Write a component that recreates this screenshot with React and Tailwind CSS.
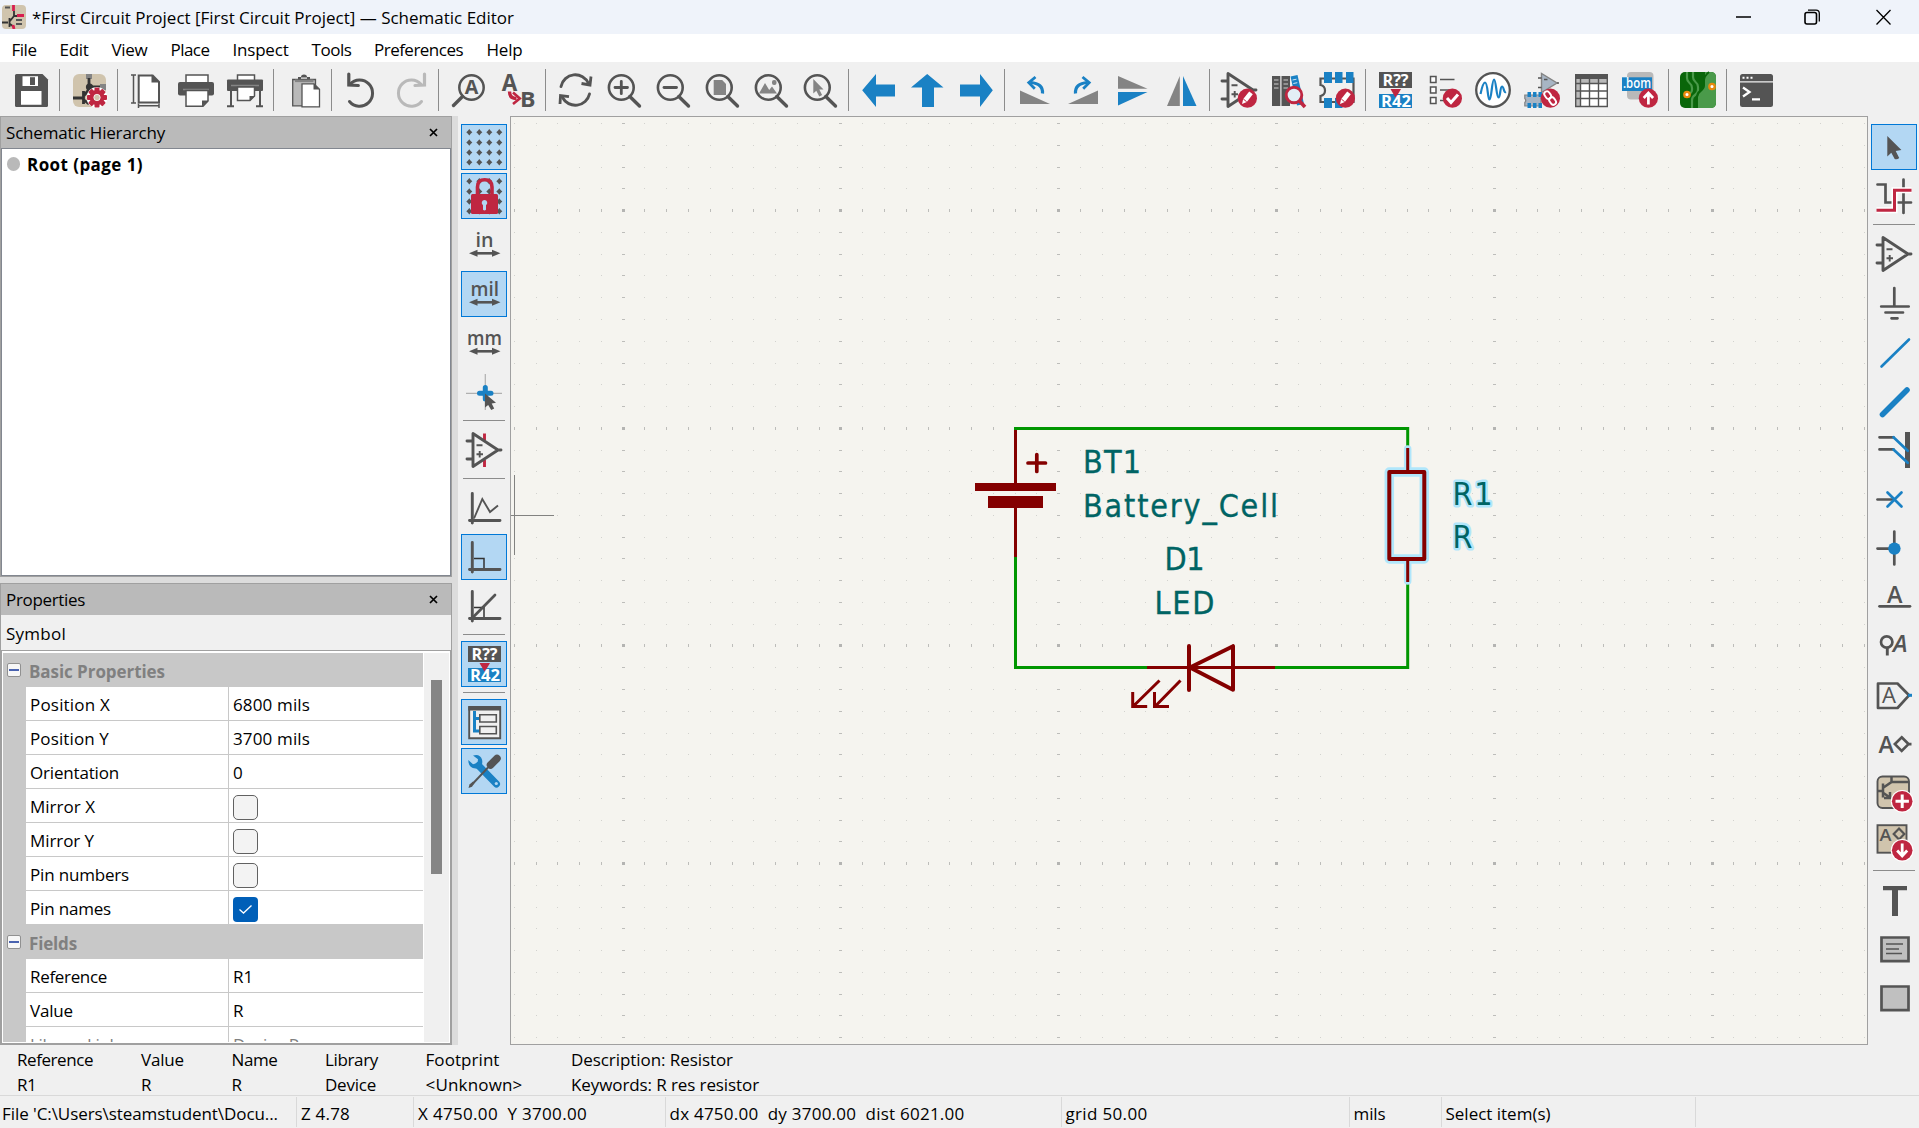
import React, { useLayoutEffect, useRef } from "react";

const D = "#545454";
const B = "#1a81c4";
const R = "#bf2641";
const G = "#848484";
const TAN = "#d0c4ad";

/* A run of text whose tracking is adjusted so it occupies w pixels. */
function Fit({ w, className = "", children }) {
  const ref = useRef(null);
  useLayoutEffect(() => {
    const el = ref.current;
    el.style.letterSpacing = "0px";
    const natural = el.getBoundingClientRect().width;
    el.style.letterSpacing = (w - natural) / children.length + "px";
  }, [w, children]);
  return (
    <span ref={ref} className={"inline-block whitespace-pre " + className}>
      {children}
    </span>
  );
}

const Svg = ({ children }) => (
  <svg width="36" height="36" viewBox="0 0 36 36" fill="none" className="shrink-0 overflow-visible">
    {children}
  </svg>
);
const Txt = ({ x, y, s, w, fill = D, bold, semi, italic, children }) => (
  <text
    x={x}
    y={y}
    fontSize={s}
    textLength={w}
    lengthAdjust="spacingAndGlyphs"
    fill={fill}
    fontWeight={bold ? 700 : semi ? 600 : 400}
    fontStyle={italic ? "italic" : "normal"}
    fontFamily='"Open Sans", sans-serif'
  >
    {children}
  </text>
);
const Badge = ({ children, r = 9.6 }) => (
  <g>
    <circle cx="26.4" cy="26.2" r={r} fill={R} />
    {children}
  </g>
);
const Pencil = () => (
  <Badge>
    <path d="M21 32l1.2-5 6-7.6 3.6 2.9-6 7.6z" fill="#fff" />
    <path d="M22.3 27l3.4 2.8" stroke={R} strokeWidth="1" />
  </Badge>
);
const Lens = ({ children }) => (
  <Svg>
    <ellipse cx="15.3" cy="15.5" rx="12.4" ry="12.2" stroke={D} strokeWidth="2.6" />
    <path d="M23.8 24.5L33.5 34" stroke={D} strokeWidth="3.4" strokeLinecap="round" />
    {children}
  </Svg>
);
const OpAmp = ({ children }) => (
  <>
    <path d="M1 9h6M1 27h6M7 1.5v33L32 18zM32 18h3" stroke={D} strokeWidth="2.9" strokeLinecap="round" strokeLinejoin="round" />
    <path d="M10.500 13.300h6M10.500 22.300h6.500M13.700 19v6.500" stroke={D} strokeWidth="1.900" />
    {children}
  </>
);
const Dots = () => (
  <>
    {[3.3, 13.3, 23.3, 33.3].map((x) =>
      [3.3, 13.5, 23.5, 33.3].map((y) => (
        <path key={x + "-" + y} d={`M${x - 3} ${y}l1.600-1.500 1.400-1.700 1.400 1.700 1.600 1.500-1.600 1.500-1.400 1.700-1.400-1.700z`} fill={D} />
      ))
    )}
  </>
);
const HArrow = () => (
  <>
    <path d="M7 26.300h23" stroke={D} strokeWidth="2.600" />
    <path d="M3 26.300l8.500-3.500v7zM34.500 26.300l-8.500-3.500v7z" fill={D} />
  </>
);
const Axes = ({ children }) => (
  <Svg>
    {children}
    <path d="M6.300 3.500V33M3.500 30.500H34" stroke={D} strokeWidth="2.900" strokeLinecap="round" />
  </Svg>
);
const Annotate = () => (
  <Svg>
    <rect x="2" y="0" width="33" height="16" fill={D} />
    <rect x="2" y="22" width="33" height="14" fill={B} />
    <Txt x="5.5" y="13.5" s="15.5" w="26" fill="#fff" bold>R??</Txt>
    <path d="M13.500 17h10.500l-5.300 9z" fill={R} />
    <Txt x="4" y="34.5" s="15.5" w="30" fill="#fff" bold>R42</Txt>
  </Svg>
);

const icons = {
  save: (
    <Svg>
      <path d="M3.500 2h26l5.500 5.500V33.500q0 1.500-1.500 1.500h-30Q2 35 2 33.500v-30Q2 2 3.500 2z" fill={D} />
      <path d="M9.500 4.200h15.500V14H9.500zM8 19h20.500v13.700H8z" fill="#fff" />
      <path d="M17 5.200h5V13h-5z" fill={D} />
    </Svg>
  ),
  settings: (
    <Svg>
      <rect x="2" y="2" width="33" height="33" rx="6" fill={TAN} />
      <path d="M15 2h6v5h-6zM29 12h6v6h-6z" fill={G} />
      <path d="M18 6v9M2 26h10M12.500 19v13M12.500 24l6-7M13 28l5 4M20 15h9" stroke="#333" strokeWidth="2.800" />
      <circle cx="18.500" cy="15" r="3.600" fill="#333" />
      <g transform="translate(26 25.500)">
        <circle r="10.500" fill="#fff" />
        {[0, 45, 90, 135].map((a) => (
          <rect key={a} x="-2.500" y="-10" width="5" height="20" rx="1" fill={R} transform={`rotate(${a})`} />
        ))}
        <circle r="7.400" fill={R} />
        <circle r="3.200" fill={TAN} stroke="#fff" strokeWidth=".8" />
      </g>
    </Svg>
  ),
  page: (
    <Svg>
      <path d="M9.700 3.500h14l6.300 6.500v20.500H9.700z" fill="#fff" stroke={D} strokeWidth="2" />
      <path d="M22.500 2.500v8h8z" fill={D} />
      <path d="M4.500 3v28M2 3h5M2 31h5M9.500 33.800H30M9.500 31.500v4.500M30 31.500v4.500" stroke={D} strokeWidth="1.500" />
    </Svg>
  ),
  print: (
    <Svg>
      <path d="M8 11V3h22v8" fill="#fff" stroke={D} strokeWidth="1.500" />
      <path d="M2 10h32q2 0 2 2v9.500q0 2-2 2H2q-2 0-2-2V12q0-2 2-2z" fill={D} />
      <path d="M5 17.500h26" stroke={G} strokeWidth="1.500" />
      <path d="M8 18.500h22V29l-5 5.300H8z" fill="#fff" stroke={D} strokeWidth="1.500" />
      <path d="M24 34.500v-6h6.500z" fill={D} />
    </Svg>
  ),
  plot: (
    <Svg>
      <path d="M10.500 8V3h17v5" fill="#fff" stroke={D} strokeWidth="1.500" />
      <path d="M1 7.500h34q1 0 1 1V18q0 1-1 1H1q-1 0-1-1V8.500q0-1 1-1z" fill={D} />
      <path d="M4 13.500h28" stroke={G} strokeWidth="1.500" />
      <path d="M10.500 15h17v9l-4.500 4.500h-12.500z" fill="#fff" stroke={D} strokeWidth="1.500" />
      <path d="M22.500 29v-5h5.500z" fill={D} />
      <path d="M4 19v15M33 19v15M0 34.300h7M29 34.300h7" stroke={D} strokeWidth="2" />
    </Svg>
  ),
  paste: (
    <Svg>
      <path d="M7.700 7.500h22.800v26.300H7.700z" fill="#b9b9b9" stroke={D} strokeWidth="1.300" />
      <path d="M10 7.500h18.500v2.600H10z" fill={G} />
      <path d="M13 7.500V5h3q0-2.600 3-2.600T22 5h3v2.500z" fill={D} />
      <path d="M16 5.500h6v1.200h-6z" fill="#eee" />
      <path d="M17 11.800h12l5.500 5.500v17.500H17z" fill="#fff" stroke={D} strokeWidth="1.300" />
      <path d="M28.500 11.500v6h6z" fill={D} />
    </Svg>
  ),
  undo: (
    <Svg>
      <path d="M7 12.200A13 13.200 0 1 1 6.500 29.500" stroke={D} strokeWidth="3" strokeLinecap="round" />
      <path d="M5.800 2v11l9.500.500" stroke={D} strokeWidth="3.200" strokeLinecap="round" />
    </Svg>
  ),
  redo: (
    <Svg>
      <path d="M29 12.200A13 13.200 0 1 0 29.500 29.500" stroke="#b9b9b9" strokeWidth="3" strokeLinecap="round" />
      <path d="M32.500 2v11l-9.500.500" stroke="#b9b9b9" strokeWidth="3.200" strokeLinecap="round" />
    </Svg>
  ),
  find: (
    <Svg>
      <circle cx="21.500" cy="15.500" r="12.200" stroke={D} strokeWidth="2.500" />
      <path d="M12.500 24.500L3.500 33.500" stroke={D} strokeWidth="3.400" strokeLinecap="round" />
      <Txt x="14.7" y="22.3" s="19" w="13.6" bold>A</Txt>
    </Svg>
  ),
  replace: (
    <Svg>
      <Txt x="2.800" y="18.500" s="23" w="15.500" bold>A</Txt>
      <Txt x="21" y="34.500" s="22" w="15.500" bold>B</Txt>
      <path d="M10.500 19.500q0 7 7 7" stroke={R} strokeWidth="3.400" />
      <path d="M14 20.500l6.800 6-6.800 5.500" stroke={R} strokeWidth="2.600" />
    </Svg>
  ),
  refresh: (
    <Svg>
      <path d="M4 14.500A14.500 14.500 0 0 1 31.500 11.500M32.500 22A14.500 14.500 0 0 1 5.500 25.500" stroke={D} strokeWidth="2.900" strokeLinecap="round" />
      <path d="M34 4.500L33 13l-8.500-1.500M3 32l.500-8.500 8.500 1.200" stroke={D} strokeWidth="2.800" />
    </Svg>
  ),
  zoomIn: <Lens><path d="M9 15.500h12.500M15.300 9.300v12.400" stroke={D} strokeWidth="2.800" strokeLinecap="round" /></Lens>,
  zoomOut: <Lens><path d="M9 15.500h12.500" stroke={D} strokeWidth="2.800" strokeLinecap="round" /></Lens>,
  zoomPage: <Lens><path d="M9.700 8h8.500l3.800 4v11H9.700z" fill={G} /></Lens>,
  zoomObj: <Lens><path d="M6 21.500L12 11l4.200 7 2.800-3.500 5 7z" fill={G} /><rect x="19" y="8" width="4.500" height="5" rx="2" fill={G} /></Lens>,
  zoomSel: <Lens><path d="M11.300 7v14.500l3-2.700 3 5.700 2.800-1.500-2.800-5.500h4.200z" fill={G} /></Lens>,
  left: <Svg><path d="M2.200 18.200L16 2v10.500h19v12H16V35z" fill={B} /></Svg>,
  up: <Svg><path d="M18.200 2L34.500 15.500H25V35H13V15.500H2z" fill={B} /></Svg>,
  right: <Svg><path d="M34.800 18.200L22 2v10.500H2v12h20V35z" fill={B} /></Svg>,
  ccw: (
    <Svg>
      <path d="M4 18.500v13.500h30z" fill={G} />
      <path d="M26.500 21.500q.800-10-12-11" stroke={B} strokeWidth="3.200" />
      <path d="M19.500 5l-6.700 5.700 6 6" stroke={B} strokeWidth="2.800" />
    </Svg>
  ),
  cw: (
    <Svg>
      <path d="M33 18.500v13.500H3z" fill={G} />
      <path d="M10.500 21.500q-.800-10 12-11" stroke={B} strokeWidth="3.200" />
      <path d="M17.500 5l6.700 5.700-6 6" stroke={B} strokeWidth="2.800" />
    </Svg>
  ),
  mirV: <Svg><path d="M4 4v12.800h29.500z" fill={G} /><path d="M4 20h29.500L4 33.500z" fill={B} /></Svg>,
  mirH: <Svg><path d="M16.800 4v30H4z" fill={G} /><path d="M20 4v30h13.500z" fill={B} /></Svg>,
  symEdit: <Svg><OpAmp /><Pencil /></Svg>,
  lib: (
    <Svg>
      <path d="M2 4h8.300v30H2zM11.500 4H20v30h-8.500z" fill={D} />
      <path d="M4 8h4.500M4 12h4.500M4 16h4.500M13.500 8H18M13.500 12H18M13.500 16H18" stroke="#ccc" strokeWidth="1.100" />
      <path d="M20.500 4.500l7-1.500 6.500 29-7 1.500z" fill={B} />
      <path d="M22.500 8l4-.8M23.300 11.500l4-.8" stroke="#cde6f7" strokeWidth="1" />
      <circle cx="24" cy="23" r="7.800" fill="#e3eef6" stroke={R} strokeWidth="2.900" />
      <path d="M29.500 29l5.500 6" stroke={R} strokeWidth="3.600" />
    </Svg>
  ),
  fpEdit: (
    <Svg>
      <path d="M1.500 6.500h33V30h-33v-6q4.500-1 4.500-5.500T1.500 13z" stroke={D} strokeWidth="2.200" fill="#f0f0f0" />
      <path d="M5 0h8v11H5zM16 0h7.500v11H16zM27 0h7.500v11H27zM5 26h8v10H5zM16 26h7.500v10H16z" fill={B} />
      <Pencil />
    </Svg>
  ),
  annotate: <Annotate />,
  erc: (
    <Svg>
      <path d="M4.500 4.500h5.500v6H4.500zM4.500 15h5.500v6H4.500zM4.500 25.500h5.500v6H4.500z" fill="#fff" stroke={D} strokeWidth="1.500" />
      <path d="M14 7.500h14.500M14 18h10M14 28.500h5" stroke={D} strokeWidth="1.300" />
      <Badge><path d="M21 26l4 4.500 7-8" stroke="#fff" strokeWidth="3" /></Badge>
    </Svg>
  ),
  sim: (
    <Svg>
      <circle cx="18" cy="18" r="16.800" fill="#fff" stroke={D} strokeWidth="2.300" />
      <path d="M5.500 22c1.500-7 3-11.500 4.500-11.500 3 0 2.500 17 4.500 17S17 7.500 19 7.500s2.500 18 4.500 18 1.500-11 3.500-11 1.500 6.500 4 5.500" stroke={B} strokeWidth="2.200" />
    </Svg>
  ),
  assign: (
    <Svg>
      <path d="M17.500 1.500v19L33 11z" fill="#a7b5c4" stroke={G} strokeWidth="1.400" />
      <path d="M14 6h3.500M14 15.500h3.500M33 11h2M20 7.500h3.500" stroke={D} strokeWidth="1.300" />
      <path d="M.800 23H17v11H.800v-3.500q2-2 0-4z" fill="#a7b5c4" stroke={G} strokeWidth="1.200" />
      <path d="M3.500 20h3.500v5H3.500zM9 20h3.500v5H9zM14.500 20H18v5h-3.500zM3.500 31H7v5H3.500zM9 31h3.500v5H9zM14.500 31H18v5h-3.500z" fill={B} />
      <Badge>
        <rect x="-2.700" y="-4.500" width="5.400" height="8" rx="2.700" transform="translate(24 23.500) rotate(-35)" stroke="#fff" strokeWidth="1.900" />
        <rect x="-2.700" y="-4" width="5.400" height="8" rx="2.700" transform="translate(28.600 29) rotate(-35)" stroke="#fff" strokeWidth="1.900" />
      </Badge>
    </Svg>
  ),
  table: (
    <Svg>
      <path d="M2.500 2.500h32v32h-32z" fill="#fff" />
      <path d="M2.500 6h32v5h-32zM2.500 6H7v28.500H2.500z" fill="#b9b9b9" />
      <path d="M2 2h33v5H2z" fill={D} />
      <path d="M2.700 2v32.500h31.600V2M2 11.500h33M2 19h33M2 26.500h33M7.500 7v27M16.500 7v27M25.500 7v27" stroke={D} strokeWidth="1.400" />
    </Svg>
  ),
  bom: (
    <Svg>
      <rect x="5" y="0" width="26.500" height="27.600" rx="4" fill="#b9b9b9" />
      <rect x="0" y="5.300" width="30" height="13.700" fill={B} />
      <Txt x="1" y="15.800" s="13.500" w="28" fill="#fff" semi>.bom</Txt>
      <Badge><path d="M26.400 32.500v-10M21.700 26l4.700-5 4.700 5" stroke="#fff" strokeWidth="2.700" /></Badge>
    </Svg>
  ),
  pcb: (
    <Svg>
      <rect x="0" y="0" width="36" height="36" rx="5" fill="#0a660a" />
      <path d="M18 36V25q0-3 3-5l2-2q2-2 2-5V0h6q5 0 5 5v26q0 5-5 5z" fill="#4a9a4a" />
      <path d="M7 0v6q0 3 2.500 5t2.500 5v2q0 2-2 3.500M13 0v5q0 3 2.500 5t2.500 5v3q0 3-3 5t-3 5v8" stroke="#4a9a4a" strokeWidth="2.200" />
      <path d="M29 0q-5 4-5 9v3q0 4-4 7-3 2-3 6v11" stroke="#0a660a" strokeWidth="1.800" />
      <circle cx="7" cy="22.500" r="2.700" fill="#fff" stroke="#e8890c" strokeWidth="2.300" />
      <circle cx="32" cy="14.500" r="2.700" fill="#fff" stroke="#e8890c" strokeWidth="2.300" />
    </Svg>
  ),
  console: (
    <Svg>
      <rect x="2" y="2" width="33" height="33" rx="2.500" fill={D} />
      <path d="M2 9.800h33" stroke="#f0f0f0" strokeWidth="1.300" />
      <path d="M4.500 4.800h2v2h-2zM8.500 4.800h2v2h-2zM12.500 4.800h2v2h-2z" fill="#fff" />
      <path d="M5 15.500l6.500 4.500L5 24.500M14 27.300h8" stroke="#fff" strokeWidth="2.300" />
    </Svg>
  ),
  grid: <Svg><Dots /></Svg>,
  lock: (
    <Svg>
      <Dots />
      <path d="M11.500 18v-9Q11.500 1.800 18.700 1.800T26 9v9" stroke={R} strokeWidth="3.600" />
      <rect x="5" y="16" width="27" height="20" rx="1.500" fill={R} />
      <path d="M18.500 22a2.900 2.900 0 0 1 1.500 5.300v4.500q-1.500 1.500-3 0v-4.500A2.900 2.900 0 0 1 18.500 22z" fill="#b3d7f3" />
    </Svg>
  ),
  inch: <Svg><Txt x="9.500" y="20" s="19" w="18" semi>in</Txt><HArrow /></Svg>,
  mil: <Svg><Txt x="4.500" y="20" s="19" w="28.500" semi>mil</Txt><HArrow /></Svg>,
  mm: <Svg><Txt x="1" y="20.300" s="19.500" w="35" semi>mm</Txt><HArrow /></Svg>,
  cursor: (
    <Svg>
      <path d="M0 19.300h36M19.300 0v36" stroke="#b0b0b0" strokeWidth="1.200" />
      <path d="M13.500 19.300h11.500M19.300 13.500V25" stroke={B} strokeWidth="5" strokeLinecap="round" />
      <path d="M19 19.500v14l3.200-2.500 3 5 3-1.500-2.500-5 4.300-.700z" fill={D} />
    </Svg>
  ),
  hidden: <Svg><path d="M18.500 1.500v7M18.500 28v7" stroke={R} strokeWidth="2.900" /><OpAmp /></Svg>,
  free: <Axes><path d="M8 28.500L16.300 9l7.700 13 8-6.500" stroke={D} strokeWidth="1.900" /></Axes>,
  ortho: <Axes><path d="M8 19.500h10v10" stroke="#333" strokeWidth="1.500" /></Axes>,
  deg45: <Axes><path d="M8 19.500h10v10" stroke="#333" strokeWidth="1.500" /><path d="M6.300 30L29 7" stroke={D} strokeWidth="2.700" strokeLinecap="round" /></Axes>,
  hier: (
    <Svg>
      <path d="M3.200 3.200h31v31h-31z" fill="#f0f0f0" stroke={D} strokeWidth="1.900" />
      <path d="M2.300 2h32.700v4.500H2.300z" fill={D} />
      <path d="M8.500 7v20h5M8.500 14.500h5" stroke={B} strokeWidth="3" />
      <path d="M13.800 10.800h16.500v7.200H13.800zM13.800 22.500h16.500v7.200H13.800z" fill="#f0f0f0" stroke={D} strokeWidth="1.600" />
    </Svg>
  ),
  tools: (
    <Svg>
      <path d="M12.500 12.500l18 18.500" stroke={B} strokeWidth="7" strokeLinecap="round" />
      <path d="M7 2.500q7-2 9 4 .800 3-.500 6.500-2 3-6 2.500-6-.500-7-6l-.200-2.500 4.700 4.300 4.500-1.300.500-3.700z" fill={B} />
      <circle cx="30.300" cy="30.500" r="1.600" fill="#b3d7f3" />
      <path d="M6 31.500L22 14.500" stroke={D} strokeWidth="1.900" />
      <path d="M2.500 35l1-3.500 3.500-3 1.500 1.500-2.500 3.700z" fill={D} />
      <path d="M24.500 12l6.500-6.500" stroke={D} strokeWidth="7.500" strokeLinecap="round" />
    </Svg>
  ),
  pointer: <Svg><path d="M11.300 7v20.500l4-3.800 3.400 6.300q2.500 1 4.500-1l-3.500-7 5.700-1z" fill={D} /></Svg>,
  netHl: (
    <Svg>
      <path d="M1.500 6.500h8v18h9M22 24.500h13M27.500 1.500v33.500" stroke={D} strokeWidth="2.700" strokeLinecap="round" />
      <path d="M.500 32.300h18V12.300h17" stroke="#fff" strokeWidth="6" />
      <path d="M.500 32.300h18V12.300h17" stroke={R} strokeWidth="3" />
    </Svg>
  ),
  opamp: <Svg><OpAmp /></Svg>,
  gnd: <Svg><path d="M18.300 3v18M5.200 21.500h27.500M9.500 27.500h17.500M15.500 33.300h6" stroke={D} strokeWidth="2.700" strokeLinecap="round" /></Svg>,
  wire: <Svg><path d="M5.500 32.500L33 5.500" stroke={B} strokeWidth="2.600" strokeLinecap="round" /></Svg>,
  bus: <Svg><path d="M6.500 31.500L31 7" stroke={B} strokeWidth="5.600" strokeLinecap="round" /></Svg>,
  busEntry: (
    <Svg>
      <path d="M29 0h5v36h-5z" fill={D} />
      <path d="M3.500 5.300h14M3.500 17.400h14" stroke={D} strokeWidth="2.700" strokeLinecap="round" />
      <path d="M17.500 5.300L31.700 18.700M17.500 17.400l14.200 13.400" stroke={B} strokeWidth="2.700" strokeLinecap="round" />
    </Svg>
  ),
  noConn: <Svg><path d="M1.500 18.500h15" stroke={D} strokeWidth="2.700" strokeLinecap="round" /><path d="M11.500 11.500l14 14M25.500 11.500l-14 14" stroke={B} strokeWidth="2.700" strokeLinecap="round" /></Svg>,
  junction: <Svg><path d="M1.500 18.600h15M18.300 1.500v33" stroke={D} strokeWidth="2.700" strokeLinecap="round" /><circle cx="18.400" cy="18.600" r="6.200" fill={B} /></Svg>,
  label: <Svg><Txt x="11" y="23.800" s="23" w="15.500" semi>A</Txt><path d="M3.500 27.300h30.500" stroke={D} strokeWidth="2.700" strokeLinecap="round" /></Svg>,
  directive: <Svg><circle cx="10.700" cy="14" r="5.700" stroke={D} strokeWidth="2.700" /><path d="M11.300 20v7.500" stroke={D} strokeWidth="2.900" /><Txt x="17" y="24" s="23" w="14.500" semi italic>A</Txt></Svg>,
  global: <Svg><path d="M2 6.500h19.500L33 18.300 21.500 31H2z" stroke={D} strokeWidth="2.700" strokeLinejoin="round" /><path d="M32 18.300h4" stroke={B} strokeWidth="3" /><Txt x="6" y="26" s="21.500" w="14">A</Txt></Svg>,
  hierLabel: <Svg><Txt x="2.500" y="27" s="23" w="15.500" semi>A</Txt><path d="M25.700 11.300l6.800 6.800-6.800 6.800-6.800-6.800zM32.500 18.100h3" stroke={D} strokeWidth="2.700" /></Svg>,
  sheet: (
    <Svg>
      <rect x="1.500" y="1.500" width="31.500" height="31.500" rx="5" fill={TAN} stroke={D} strokeWidth="1.900" />
      <path d="M1.500 16H7M7 8.500v14M7.500 12.500L15.500 7V2M15.500 7H33M7.500 18l7 5M14 17v6h-6" stroke={D} strokeWidth="2.500" />
      <circle cx="26.200" cy="26.300" r="11.400" fill="#fff" />
      <circle cx="26.200" cy="26.300" r="10.300" fill={R} />
      <path d="M19.500 26.300h13.400M26.200 19.600V33" stroke="#fff" strokeWidth="3" />
    </Svg>
  ),
  importPins: (
    <Svg>
      <rect x="1.500" y="1.200" width="29" height="27.500" fill={TAN} stroke={D} strokeWidth="1.900" />
      <Txt x="3.500" y="16.500" s="17" w="12" semi>A</Txt>
      <path d="M23 4.500l5.300 5.500L23 15.500 17.700 10z" stroke={D} strokeWidth="2.200" />
      <circle cx="26.200" cy="26.300" r="11.400" fill="#fff" />
      <circle cx="26.200" cy="26.300" r="10.300" fill={R} />
      <path d="M26.200 19.500v11.500M21.200 26.500l5 5.500 5-5.500" stroke="#fff" strokeWidth="2.800" />
    </Svg>
  ),
  text: <Svg><path d="M7 4h24v4.200h-9V34h-6V8.200H7z" fill={D} /></Svg>,
  textbox: <Svg><path d="M5.500 6.500h27V30.200h-27z" fill="#c0c0c0" stroke={D} strokeWidth="2.700" /><path d="M10 13h17M10 18h13M10 22.500h16" stroke={D} strokeWidth="1.700" /></Svg>,
  rect: <Svg><path d="M5.500 6.500h27V30.200h-27z" fill="#c0c0c0" stroke={D} strokeWidth="2.700" /></Svg>,
};

const topBar = [
  ["save"], ["settings"], ["page", "print", "plot"], ["paste"], ["undo", "redo"], ["find", "replace"],
  ["refresh", "zoomIn", "zoomOut", "zoomPage", "zoomObj", "zoomSel"], ["left", "up", "right"],
  ["ccw", "cw", "mirV", "mirH"], ["symEdit", "lib", "fpEdit"],
  ["annotate", "erc", "sim", "assign", "table", "bom"], ["pcb"], ["console"],
];
const leftBar = ["grid*", "lock*", "inch", "mil*", "mm", "cursor", "|", "hidden", "|", "free", "ortho*", "deg45", "|", "annotate*", "|", "hier*", "tools*"];
const rightBar = ["pointer*", "netHl", "|", "opamp", "gnd", "wire", "bus", "busEntry", "noConn", "junction", "label", "directive", "global", "hierLabel", "sheet", "importPins", "|", "text", "textbox", "rect"];

function VBar({ items, className }) {
  return (
    <div className={"flex flex-col bg-[#f0f0f0] pt-2 " + className}>
      {items.map((it, i) => {
        if (it === "|") return <div key={i} className="h-[9px] w-[46px] px-[2px] pt-[2px]"><div className="h-px bg-[#8c8c8c]" /></div>;
        const on = it.endsWith("*");
        return (
          <div key={i} className={"mb-[3px] flex h-[46px] w-[46px] shrink-0 items-center justify-center " + (on ? "border border-[#0078d7] bg-[#b3d7f3]" : "")}>
            {icons[it.replace("*", "")]}
          </div>
        );
      })}
    </div>
  );
}

function PaneHeader({ title, w }) {
  return (
    <div className="flex h-[31px] shrink-0 items-center justify-between bg-[#bababa] pl-[5px] pr-[13px]">
      <Fit w={w} className="pt-px">{title}</Fit>
      <svg width="9" height="9" viewBox="0 0 9 9" className="mb-px"><path d="M1 1l7 7M8 1L1 8" stroke="#000" strokeWidth="1.700" /></svg>
    </div>
  );
}

function Check({ on }) {
  return on ? (
    <div className="flex h-[25px] w-[25px] items-center justify-center rounded-[4px] bg-[#005fb8]">
      <svg width="15" height="11" viewBox="0 0 15 11" fill="none"><path d="M1.500 5.500L5.500 9l8-7.500" stroke="#fff" strokeWidth="1.300" /></svg>
    </div>
  ) : (
    <div className="h-[25px] w-[25px] rounded-[5px] border border-[#616161] bg-[#f3f3f3]" />
  );
}

function Category({ children, w }) {
  return (
    <div className="flex h-[34px] shrink-0 items-center bg-[#c8c8c8] pl-1 text-[#808080]">
      <div className="flex h-[14px] w-[14px] items-center justify-center rounded-[2px] border border-[#919191] bg-[#f7f7f7]">
        <div className="h-[2px] w-[10px] bg-[#4a63b0]" />
      </div>
      <Fit w={w} className="ml-[8px] pt-[3px] font-bold">{children}</Fit>
    </div>
  );
}

function Row({ label, w, value, vw, muted }) {
  return (
    <div className={"flex h-[34px] shrink-0 pl-[23px] " + (muted ? "text-[#808080]" : "")}>
      <div className="flex w-[203px] items-center border-b border-r border-[#c8c8c8] bg-white pl-[4px] pt-[3px]">
        <Fit w={w}>{label}</Fit>
      </div>
      <div className="flex flex-1 items-center border-b border-[#c8c8c8] bg-white pl-[4px] pt-[3px]">
        {typeof value === "string" ? <Fit w={vw}>{value}</Fit> : <Check on={value} />}
      </div>
    </div>
  );
}

function gridPaths() {
  let minor = "", vt = "", ht = "", major = "";
  for (let i = -5; i <= 57; i++) {
    for (let j = -14; j <= 28; j++) {
      const x = Math.floor(623.2 + i * 21.776);
      const y = Math.floor(428.3 + j * 21.765);
      const mx = i % 10 === 0, my = j % 10 === 0;
      if (mx && my) major += `M${x - 1} ${y - 1}h3v3h-3z`;
      else if (my) vt += `M${x} ${y - 1}h1v3h-1z`;
      else if (mx) ht += `M${x - 1} ${y}h3v1h-3z`;
      else minor += `M${x} ${y}h1v1h-1z`;
    }
  }
  return { minor, ticks: vt + ht, major };
}

/* Field text: narrow glyphs set with open tracking. */
function Label({ x, y, w, k = 0.9, glow, children }) {
  const common = {
    transform: `translate(${x} ${y}) scale(${k} 1)`,
    fontSize: 32,
    textLength: w / k,
    lengthAdjust: "spacing",
    fontFamily: '"DejaVu Sans", sans-serif',
    fill: "#006464",
    strokeLinejoin: "round",
  };
  return (
    <text {...common} stroke={glow ? "#b0e6fb" : "#006464"} strokeWidth={glow ? 5 : 0.35} className="[paint-order:stroke]">
      {children}
    </text>
  );
}

function Schematic() {
  const g = gridPaths();
  return (
    <svg width="1356" height="927" viewBox="511 117 1356 927" fill="none" className="block">
      <path d={g.minor} fill="#d2d2ce" />
      <path d={g.ticks} fill="#bdbdba" />
      <path d={g.major} fill="#b4b4b2" />
      <path d="M511 515.500h43M514.500 475v80" stroke="#828280" strokeWidth="1" />
      <path d="M1015.500 430v-1.500h392.200V449M1407.700 582v85.500H1275M1147 667.500h-131.500V557" stroke="#009600" strokeWidth="3" />
      <g stroke="#840000" strokeWidth="3">
        <path d="M1015.500 430v53M1015.500 508v49M1147 667.500h128" />
        <path d="M975 483h81v8h-81zM988 496h55v12h-55z" fill="#840000" stroke="none" />
        <path d="M1028 463h17.500M1036.800 454.500v17" strokeWidth="3.700" strokeLinecap="round" />
        <path d="M1189 646v44M1190 667.500l43-21.300v43.600z" strokeWidth="4" strokeLinecap="round" strokeLinejoin="round" />
        <path d="M1159.500 680.500L1133 706.500M1132.700 692v14.500h14.500M1180.500 680.500L1155 706.500M1154.500 692v14.500h14.500" />
        <path d="M1407.700 449v23M1407.700 559v22" stroke="#b0e6fb" strokeWidth="7.500" strokeLinecap="round" />
        <rect x="1389.300" y="472" width="35" height="87" stroke="#b0e6fb" strokeWidth="9.500" strokeLinejoin="round" />
        <path d="M1407.700 448v24M1407.700 559v23" />
        <rect x="1389.300" y="472" width="35" height="87" strokeWidth="4" strokeLinejoin="round" />
      </g>
      <Label x="1083" y="472.700" w="58">BT1</Label>
      <Label x="1083" y="516.700" w="195">Battery_Cell</Label>
      <Label x="1164.500" y="569.700" w="40">D1</Label>
      <Label x="1154.500" y="613.700" w="60">LED</Label>
      <Label x="1452.500" y="504.700" w="40" glow>R1</Label>
      <Label x="1452.500" y="547.700" w="20" glow>R</Label>
    </svg>
  );
}

const menus = [["File", 25, 48], ["Edit", 29, 52], ["View", 36, 59], ["Place", 39, 62], ["Inspect", 56, 79], ["Tools", 40, 62.5], ["Preferences", 89, 112.5], ["Help", 36, 60]];
const info = [
  ["Reference", 76, "R1", 19, 124], ["Value", 43, "R", 10, 90.5], ["Name", 46, "R", 10, 93.5],
  ["Library", 53, "Device", 51, 100.5], ["Footprint", 74, "<Unknown>", 97, 145.5], ["Description: Resistor", 162, "Keywords: R res resistor", 188, 400],
];
const status = [
  ["File 'C:\\Users\\steamstudent\\Docu...", 276, 297], ["Z 4.78", 49, 117], ["X 4750.00  Y 3700.00", 169, 251.5],
  ["dx 4750.00  dy 3700.00  dist 6021.00", 295, 396], ["grid 50.00", 82, 288], ["mils", 32, 92], ["Select item(s)", 105, 254],
];

export default function App() {
  return (
    <div className='flex h-[1128px] w-[1919px] flex-col overflow-hidden bg-[#f0f0f0] font-["Open_Sans",sans-serif] text-[17px] leading-[24px] text-black'>
      <div className="flex h-[34px] shrink-0 items-center justify-between bg-[#eff3fa] pl-[2px] pr-[27px]">
        <div className="flex items-center">
          <svg width="24" height="24" viewBox="0 0 24 24" fill="none" className="mr-[6px]">
            <rect width="24" height="24" rx="4" fill={TAN} />
            <path d="M3 2.500h5M14 15h6M14 19h6" stroke={D} strokeWidth="2" />
            <path d="M0 17.500h6M7.500 13v9M8 16l4-5V6M12 11h4M8 19l4 3" stroke="#333" strokeWidth="1.800" />
            <path d="M11.500 0v6M15 10.500h7M11 20l1 4" stroke="#d81e50" strokeWidth="2.800" />
          </svg>
          <Fit w={482} className="pt-px">*First Circuit Project [First Circuit Project] — Schematic Editor</Fit>
        </div>
        <svg width="156" height="16" viewBox="0 0 156 16" fill="none" stroke="#000" strokeWidth="1.300">
          <path d="M0 8h15M140.500 1l14 14.500M154.500 1l-14 14.500" />
          <rect x="69" y="3.500" width="11.500" height="11.500" rx="2" strokeWidth="1.600" />
          <path d="M72 1.200h8q3.300 0 3.300 3.300v8" />
        </svg>
      </div>

      <div className="flex h-[28px] shrink-0 items-center bg-white pl-[11.5px]">
        {menus.map(([t, w, box]) => (
          <div key={t} className="shrink-0 pt-[3px]" style={{ width: box }}><Fit w={w}>{t}</Fit></div>
        ))}
      </div>

      <div className="flex h-[54px] shrink-0 items-center pb-px pl-[6.5px] pt-[3px]">
        {topBar.map((grp, i) => (
          <React.Fragment key={i}>
            {i > 0 && <div className="flex w-[9px] shrink-0 pl-[3px]"><div className="h-[42px] w-px bg-[#8c8c8c]" /></div>}
            {grp.map((n) => <div key={n} className="flex w-[49px] shrink-0 justify-center">{icons[n]}</div>)}
          </React.Fragment>
        ))}
      </div>

      <div className="flex h-[929px] shrink-0">
        <div className="flex w-[458px] shrink-0 flex-col bg-[#dcdcdc] pr-[6px]">
          <div className="flex h-[461px] shrink-0 flex-col border border-[#a0a0a0]">
            <PaneHeader title="Schematic Hierarchy" w={159} />
            <div className="flex flex-1 items-start border border-[#828790] bg-white pl-[5px] pt-[4px]">
              <div className="mt-[4px] h-[14px] w-[13px] rounded-full bg-[#b9b9b9]" />
              <Fit w={116} className="ml-[7px] font-bold">Root (page 1)</Fit>
            </div>
          </div>
          <div className="mt-[6px] flex h-[462px] shrink-0 flex-col border border-[#a0a0a0]">
            <PaneHeader title="Properties" w={79} />
            <div className="flex h-[35px] shrink-0 items-center bg-[#f0f0f0] pl-[5px] pt-[3px]"><Fit w={60}>Symbol</Fit></div>
            <div className="flex min-h-0 flex-1 border border-[#a0a0a0] bg-white p-px pt-[2px]">
              <div className="flex min-h-0 w-[420px] flex-col overflow-hidden bg-[#c8c8c8]">
                <Category w={136}>Basic Properties</Category>
                <Row label="Position X" w={80} value="6800 mils" vw={77} />
                <Row label="Position Y" w={79} value="3700 mils" vw={77} />
                <Row label="Orientation" w={89} value="0" vw={10} />
                <Row label="Mirror X" w={65} value={false} />
                <Row label="Mirror Y" w={64} value={false} />
                <Row label="Pin numbers" w={99} value={false} />
                <Row label="Pin names" w={81} value={true} />
                <Category w={48}>Fields</Category>
                <Row label="Reference" w={77} value="R1" vw={20} />
                <Row label="Value" w={43} value="R" vw={11} />
                <Row label="Library Link" w={88} value="Device:R" vw={66} muted />
              </div>
              <div className="ml-px flex-1 bg-[#f0f0f0] pl-[7px] pt-[27px]"><div className="h-[194px] w-[11px] bg-[#858585]" /></div>
            </div>
          </div>
        </div>
        <VBar items={leftBar} className="w-[52px] shrink-0 pl-[3px]" />
        <div className="h-[929px] w-[1358px] shrink-0 border border-[#a0a0a0] bg-[#f5f4ef]"><Schematic /></div>
        <VBar items={rightBar} className="w-[51px] shrink-0 pl-[3px]" />
      </div>

      <div className="flex h-[50px] shrink-0 pl-[17px] pt-[2px]">
        {info.map(([a, aw, b, bw, box], i) => (
          <div key={i} className="flex shrink-0 flex-col items-start leading-[25px]" style={{ width: box }}>
            <Fit w={aw}>{a}</Fit>
            <Fit w={bw}>{b}</Fit>
          </div>
        ))}
      </div>
      <div className="flex h-[33px] shrink-0 items-center border-t border-[#d9d9d9]">
        {status.map(([t, w, box]) => (
          <div key={t} className="flex h-[30px] shrink-0 items-center border-r border-[#d9d9d9] pl-[4px] pt-[4px] first:pl-[2px]" style={{ width: box }}>
            <Fit w={w}>{t}</Fit>
          </div>
        ))}
      </div>
    </div>
  );
}
